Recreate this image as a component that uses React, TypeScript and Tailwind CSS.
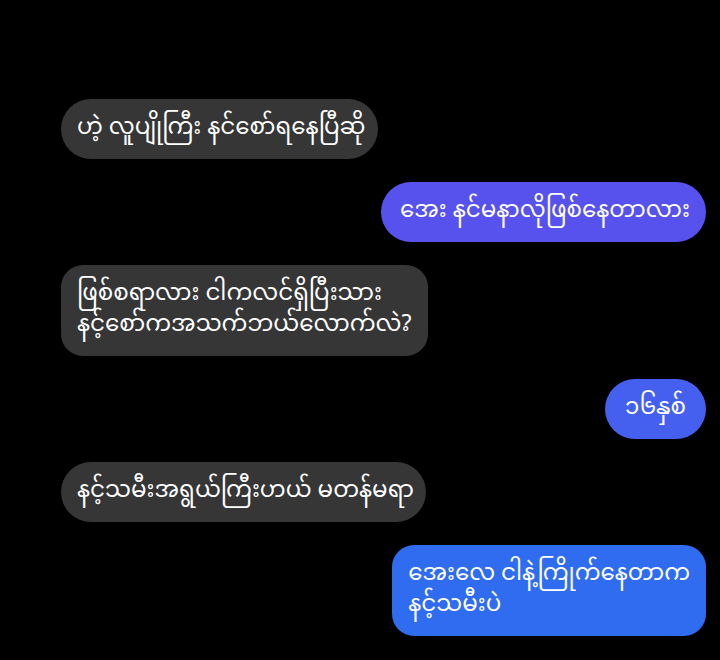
import React from 'react';

type Message = {
  id: number;
  side: 'left' | 'right';
  lines: string[];
  bubbleClass: string;
};

const messages: Message[] = [
  { id: 1, side: 'left', lines: ['ဟဲ့ လူပျိုကြီး နင်စော်ရနေပြီဆို'], bubbleClass: 'bg-[#363636] rounded-[30px] pl-4 pr-[13px]' },
  { id: 2, side: 'right', lines: ['အေး နင်မနာလိုဖြစ်နေတာလား'], bubbleClass: 'bg-[#5752ee] rounded-[30px] pl-[19px] pr-4' },
  {
    id: 3,
    side: 'left',
    lines: ['ဖြစ်စရာလား ငါကလင်ရှိပြီးသား', 'နင့်စော်ကအသက်ဘယ်လောက်လဲ?'],
    bubbleClass: 'bg-[#363636] rounded-[22px] px-4',
  },
  { id: 4, side: 'right', lines: ['၁၆နှစ်'], bubbleClass: 'bg-[#4560ef] rounded-[30px] px-5' },
  { id: 5, side: 'left', lines: ['နင့်သမီးအရွယ်ကြီးဟယ် မတန်မရာ'], bubbleClass: 'bg-[#363636] rounded-[30px] pl-4 pr-3' },
  {
    id: 6,
    side: 'right',
    lines: ['အေးလေ ငါနဲ့ကြိုက်နေတာက', 'နင့်သမီးပဲ'],
    bubbleClass: 'bg-[#2f6cf0] rounded-[22px] px-4',
  },
];

export default function App() {
  return (
    <div
      className="w-[720px] h-[660px] bg-black overflow-hidden pt-[99px] pl-[61px] pr-[14px] flex flex-col gap-[23px]"
      style={{ fontFamily: '"Noto Sans Myanmar", "Padauk", "Myanmar Text", "Noto Sans", sans-serif' }}
    >
      {messages.map((m) => (
        <div key={m.id} className={m.side === 'left' ? 'flex justify-start' : 'flex justify-end'}>
          <div className={`${m.bubbleClass} pt-[15px] pb-[14px] text-white text-[23px] leading-[31px]`}>
            {m.lines.map((line, i) => (
              <div key={i} className="whitespace-nowrap">
                {line}
              </div>
            ))}
          </div>
        </div>
      ))}
    </div>
  );
}
